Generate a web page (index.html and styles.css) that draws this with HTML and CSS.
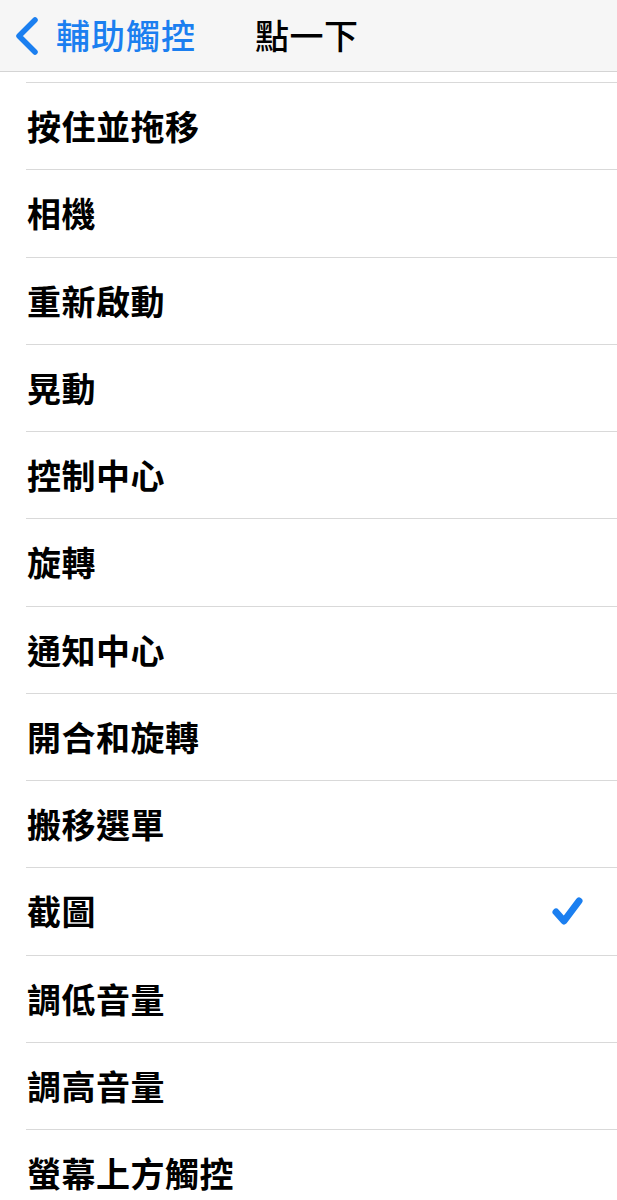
FILE: index.html
```html
<!DOCTYPE html>
<html lang="zh-Hant">
<head>
    <meta charset="UTF-8">
    <meta name="viewport" content="width=device-width, initial-scale=1.0">
    <title>點一下</title>
    <link rel="stylesheet" href="styles.css">
</head>
<body>
    <header class="nav-bar">
        <a class="back" href="#">
            <svg class="chevron" width="26" height="38" viewBox="0 0 26 38">
                <path d="M21 3 L5 19 L21 35" fill="none" stroke="#1b7ff0" stroke-width="5.5" stroke-linecap="round" stroke-linejoin="round"/>
            </svg>
            <span>輔助觸控</span>
        </a>
        <h1 class="title">點一下</h1>
    </header>

    <ul class="action-list">
        <li class="row">按住並拖移</li>
        <li class="row">相機</li>
        <li class="row">重新啟動</li>
        <li class="row">晃動</li>
        <li class="row">控制中心</li>
        <li class="row">旋轉</li>
        <li class="row">通知中心</li>
        <li class="row">開合和旋轉</li>
        <li class="row">搬移選單</li>
        <li class="row selected">截圖
            <svg class="check" width="36" height="36" viewBox="0 0 36 36">
                <path d="M7 19 L15 28 L30 8" fill="none" stroke="#1b7ff0" stroke-width="7" stroke-linecap="round" stroke-linejoin="round"/>
            </svg>
        </li>
        <li class="row">調低音量</li>
        <li class="row">調高音量</li>
        <li class="row">螢幕上方觸控</li>
    </ul>
</body>
</html>
```

FILE: styles.css
```css
/* General Styles */
body {
    margin: 0;
    font-family: "Noto Sans CJK TC", "Noto Sans", sans-serif;
    background: #fff;
    color: #000;
    overflow: hidden;
}

.nav-bar {
    height: 71px;
    display: flex;
    align-items: center;
    background: #f6f6f6;
    border-bottom: 1px solid #d4d4d4;
}

.back {
    display: flex;
    align-items: center;
    gap: 16px;
    padding-left: 14px;
    color: #1b7ff0;
    text-decoration: none;
    font-size: 34px;
    font-weight: 500;
    letter-spacing: 1px;
}

.back span {
    line-height: 1;
    margin-top: -2px;
}

.chevron {
    flex-shrink: 0;
}

.title {
    margin: -2px 0 0 59px;
    font-size: 34px;
    font-weight: 500;
    line-height: 1;
    letter-spacing: 0.5px;
}

.action-list {
    list-style: none;
    margin: 0;
    padding: 10px 0 0 26px;
}

.row {
    box-sizing: border-box;
    height: 87.25px;
    display: flex;
    align-items: center;
    justify-content: space-between;
    border-top: 1px solid #d9d9d9;
    padding: 0 32px 0 1px;
    font-size: 34px;
    font-weight: 700;
    line-height: 1;
    letter-spacing: 0.5px;
}

.check {
    flex-shrink: 0;
}
```
